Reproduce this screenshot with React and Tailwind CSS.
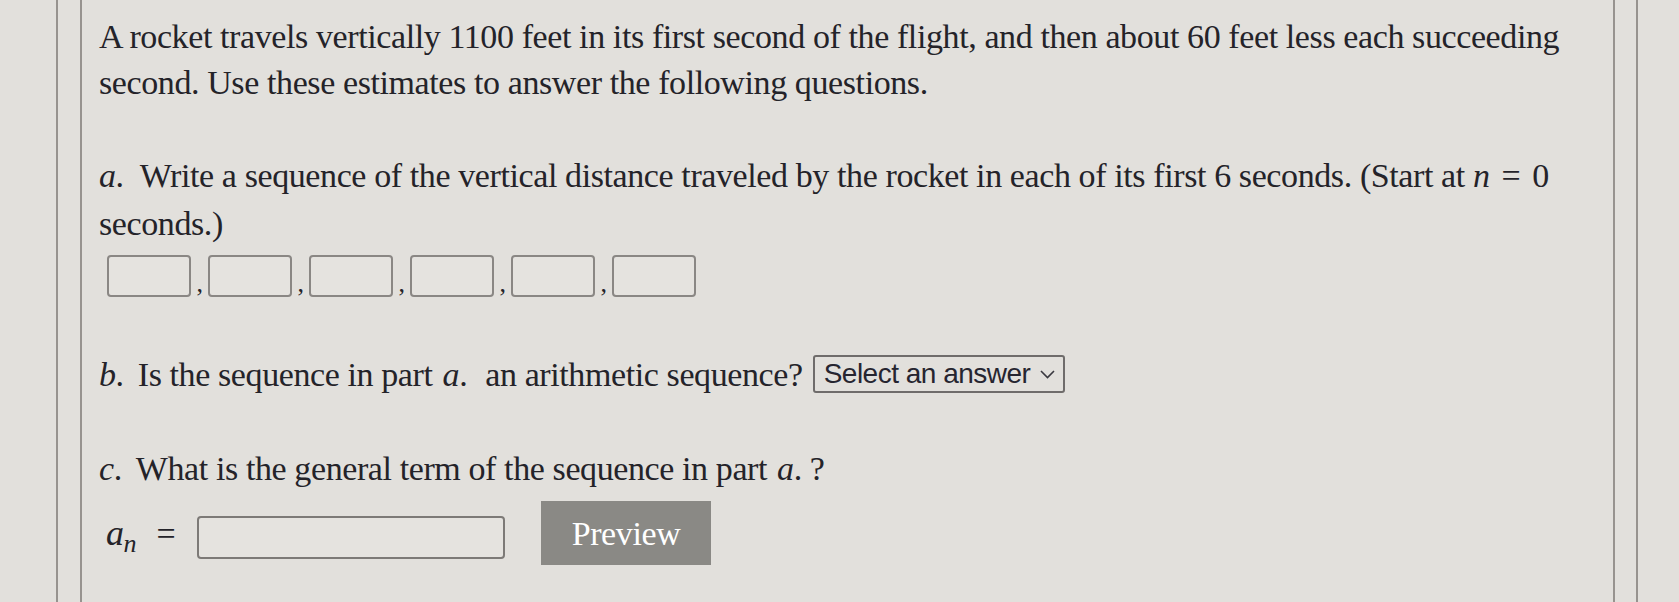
import React from 'react';

const Box = () => (
  <div className="w-[84px] h-[42px] rounded-[4px] border-2 border-[#8a8784] bg-[#e5e3df]" />
);

export default function App() {
  const boxes = [0, 1, 2, 3, 4, 5];

  return (
    <div className="w-[1679px] h-[602px] overflow-hidden bg-[#e2e0dc] flex font-['Liberation_Serif',serif] text-[#242329]">
      {/* outer frame */}
      <div className="ml-[56px] mr-[41px] flex-1 flex border-l-2 border-r-2 border-[#97938f] pl-[22px]">
        {/* inner frame */}
        <div className="flex-1 border-l-2 border-r-2 border-[#97938f] pl-[17px] mr-[21px] text-[34px] tracking-[-0.4px]">
          <p className="mt-[14px] leading-[46px] pr-[20px]">
            A rocket travels vertically 1100 feet in its first second of the flight, and then about 60 feet less each
            succeeding second. Use these estimates to answer the following questions.
          </p>

          {/* part a */}
          <div className="mt-[46px] leading-[48px] pr-[20px]">
            <span className="inline-block italic">a</span>
            <span className="inline-block mr-[16px]">.</span>
            Write a sequence of the vertical distance traveled by the rocket in each of its first 6 seconds. (Start at{' '}
            <span className="inline-block italic mr-[12px]">n</span>
            <span className="inline-block mr-[12px]">=</span>
            <span className="inline-block">0</span> seconds.)
          </div>
          <div className="mt-[7px] ml-[8px] flex items-end">
            {boxes.map((i) => (
              <div key={i} className="flex items-end">
                <Box />
                {i < 5 && <span className="w-[17px] text-center text-[26px] leading-[24px] mb-[1px]">,</span>}
              </div>
            ))}
          </div>

          {/* part b */}
          <div className="mt-[58px] flex items-center h-[38px]">
            <span className="italic">b</span>
            <span className="mr-[14px]">.</span>
            <span>Is the sequence in part</span>
            <span className="ml-[10px] italic">a</span>
            <span className="mr-[18px]">.</span>
            <span>an arithmetic sequence?</span>
            <div className="ml-[10px] h-[38px] flex items-center rounded-[3px] border-2 border-[#6f6c6b] pl-[9px] pr-[8px] font-['Liberation_Sans',sans-serif] text-[28px] tracking-[-0.5px] text-[#262530]">
              <span>Select an answer</span>
              <svg className="ml-[10px]" width="15" height="10" viewBox="0 0 15 10" fill="none" stroke="#3a3940" strokeWidth="1.6">
                <path d="M1 2 L7.5 8.5 L14 2" />
              </svg>
            </div>
          </div>

          {/* part c */}
          <div className="mt-[52px] h-[46px] flex items-center">
            <span className="italic">c</span>
            <span className="mr-[14px]">.</span>
            <span>What is the general term of the sequence in part</span>
            <span className="ml-[10px] italic">a</span>
            <span className="mr-[8px]">.</span>
            <span>?</span>
          </div>

          <div className="mt-[10px] flex items-center h-[64px]">
            <span className="ml-[7px] w-[48px] italic text-[36px]">
              a<sub className="text-[26px] italic">n</sub>
            </span>
            <span className="w-[24px] text-center">=</span>
            <div className="ml-[19px] mt-[8px] w-[308px] h-[43px] rounded-[4px] border-2 border-[#7d7a77] bg-[#e5e3df]" />
            <div className="ml-[36px] w-[170px] h-[64px] bg-[#8a8985] text-white flex items-center justify-center text-[34px]">
              Preview
            </div>
          </div>
        </div>
      </div>
    </div>
  );
}
